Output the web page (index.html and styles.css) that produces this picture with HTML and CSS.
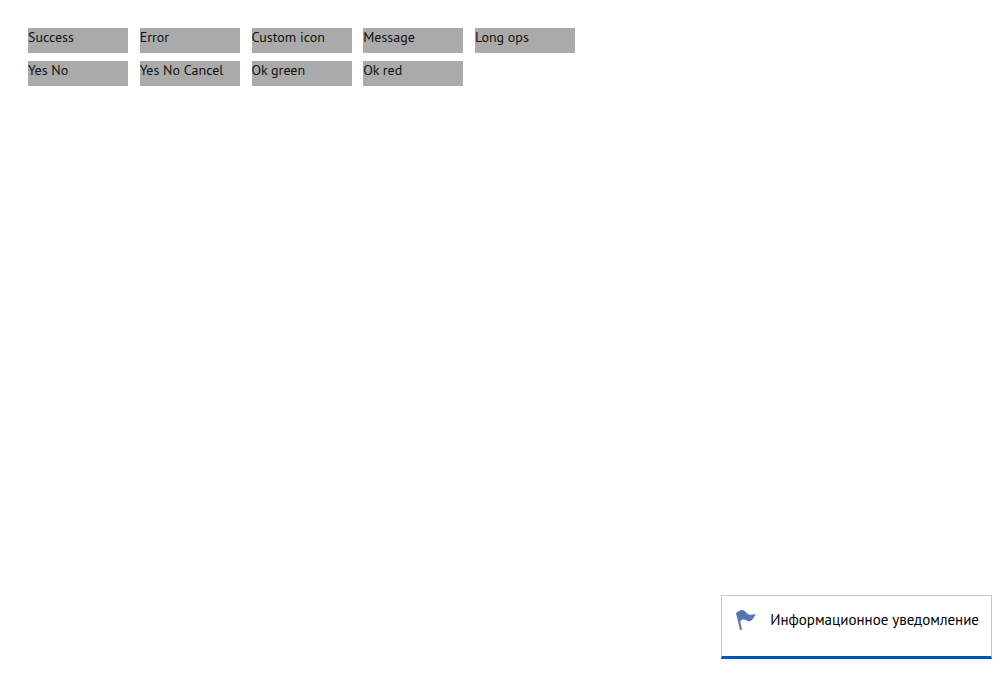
FILE: index.html
```html
<!DOCTYPE html>
<html lang="ru">
<head>
<meta charset="utf-8">
<meta name="viewport" content="width=device-width, initial-scale=1">
<title>Notifications</title>
<link rel="stylesheet" href="styles.css">
</head>
<body>
<main class="actions">
  <button class="action" type="button">Success</button>
  <button class="action" type="button">Error</button>
  <button class="action" type="button">Custom icon</button>
  <button class="action" type="button">Message</button>
  <button class="action" type="button">Long ops</button>
  <button class="action" type="button">Yes No</button>
  <button class="action" type="button">Yes No Cancel</button>
  <button class="action" type="button">Ok green</button>
  <button class="action" type="button">Ok red</button>
</main>
<div class="notice" role="status">
  <svg class="notice-icon" viewBox="0 0 20 20" aria-hidden="true"><path d="M0 3 C2.5 1.2 4 .1 6.5 .1 C9.5 .1 10.3 4.4 14 4.8 C16 5 18 4.3 20 4 C18 6.5 16.5 11.3 13 11.3 C10.8 11.3 9.5 9.3 7 9.6 C5.5 9.8 4.7 10.6 4.2 11.2 L6 19.7 L4 20 Z"/></svg>
  <span class="notice-text">Информационное уведомление</span>
</div>
</body>
</html>
```
FILE: styles.css
```css
body {
  margin: 0;
  background: #fff;
  color: #111;
  font-family: "PT Sans", "Noto Sans", sans-serif;
}

.actions {
  display: grid;
  grid-template-columns: repeat(auto-fill, 100px);
  justify-content: space-between;
  row-gap: 8px;
  column-gap: 8px;
  max-width: 547px;
  padding: 28px;
}

.action {
  display: flex;
  align-items: flex-start;
  height: 25px;
  padding: 0;
  border: 0;
  background: #aaa;
  color: #111;
  font-family: inherit;
  font-size: 14px;
  line-height: 19px;
  white-space: nowrap;
  cursor: pointer;
}

.notice {
  position: fixed;
  right: 16px;
  bottom: 16px;
  display: flex;
  align-items: flex-start;
  gap: 14px;
  padding: 14px 12px 26px 14px;
  border: 1px solid #c8c8c8;
  border-bottom: 3px solid #0055bb;
  background: #fff;
  color: #000;
}

.notice-icon {
  width: 20px;
  height: 20px;
  fill: #5577b0;
}

.notice-text {
  font-size: 15px;
  line-height: 20px;
  white-space: nowrap;
}
```
